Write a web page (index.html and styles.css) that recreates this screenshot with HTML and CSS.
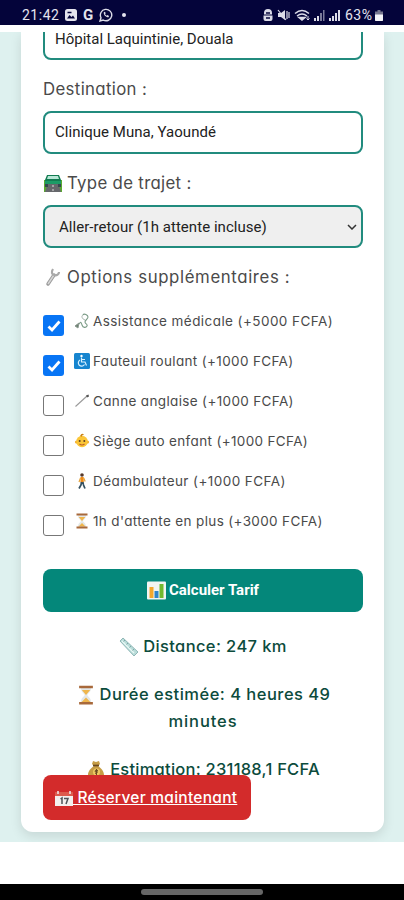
FILE: index.html
```html
<!DOCTYPE html>
<html lang="fr">

<head>
    <meta charset="utf-8">
    <meta name="viewport" content="width=device-width, initial-scale=1.0">
    <title>Réservation de trajet</title>
    <link rel="stylesheet" href="styles.css">
</head>

<body>

    <header class="statusbar">
        <span class="heure">21:42</span>
        <svg class="s-photo" width="12" height="12" viewBox="0 0 12 12"><rect width="12" height="12" rx="2.5" fill="#e4e4ee"/><path d="M2 9.500 4.500 6l2 2L8 6.500l2 3z" fill="#04043a"/><path d="M2.500 3.500h4" stroke="#04043a" stroke-width="1.500"/></svg>
        <span class="google">G</span>
        <svg class="s-wa" width="14" height="14" viewBox="0 0 14 14" fill="none" stroke="#dcdce8" stroke-width="1.400"><path d="M1 13l1-3.300A5.700 5.700 0 1 1 4.200 12z"/><path d="M4.800 4.200c-.5 2.500 2.300 5.300 4.800 5l.4-1.300-1.500-.8-.9.700-1.600-1.600.7-.9-.7-1.500z" fill="#dcdce8" stroke="none"/></svg>
        <i class="point"></i>
        <svg class="s-droite" width="82" height="14" viewBox="0 0 82 14" fill="#dcdce8">
            <path d="M1 5a4 4 0 0 1 8 0v1.500H1zM.5 7.500h9V11a2 2 0 0 1-2 2h-5a2 2 0 0 1-2-2z"/>
            <path d="M3 5h4M3 10h4" stroke="#04043a" stroke-width="1.500"/>
            <path d="M15 5h3l4-3v10l-4-3h-3z"/>
            <path d="M15 2l8 10M24 3v8M26 4v6" stroke="#dcdce8" stroke-width="1.200"/>
            <g fill="none" stroke="#dcdce8" stroke-width="1.500"><path d="M32 5.500q7-6 14 0M34 8q5-4 10 0"/><path d="M36 9.500h6L39 12z" fill="#dcdce8"/><path d="M45 8v4m-1.500-1.500L45 12l1.500-1.500" stroke-width="1"/></g>
            <path d="M51 10h2v3h-2zM54 8h2v5h-2z"/><path d="M57 5h2v8h-2zM60 2h1.500v11H60z" opacity=".55"/>
            <path d="M66 10h2v3h-2zM69 8h2v5h-2zM72 5h2v8h-2zM75 2h2v11h-2z"/>
        </svg>
        <span class="pourcent">63%</span>
        <svg class="s-bat" width="8" height="11" viewBox="0 0 8 11"><path d="M2.500 0h3v1.500H8V11H0V1.500h2.500z" fill="#77778f"/><path d="M0 4.500h8V10a1 1 0 0 1-1 1H1a1 1 0 0 1-1-1z" fill="#f4f4f8"/></svg>
    </header>

    <main class="page">
        <form class="carte">
            <div class="champ premier">Hôpital Laquintinie, Douala</div>

            <div class="titre"><span class="t-dest">Destination :</span></div>
            <div class="champ"><span>Clinique Muna, Yaoundé</span></div>

            <div class="titre">
                <svg width="20" height="20" viewBox="0 0 20 20"><path d="M1 7h18v12H1z" fill="#5aa832"/><path d="M6 7h8l4 12H2z" fill="#66686c"/><path d="M10 8v11" stroke="#ddd" stroke-dasharray="2 2"/><path d="M4 2h12l2 5v4H2V7z" fill="#127c51"/><path d="M5 3h10l1 3H4z" fill="#b7e7d6"/><path d="M2 8h16v3H2z" fill="#1c9b66"/><path d="M2 11h3v3H2zM15 11h3v3h-3z" fill="#37474f"/></svg>
                <span class="t-type">Type de trajet :</span>
            </div>
            <div class="champ choix">
                <span>Aller-retour (1h attente incluse)</span>
                <svg width="10" height="6" viewBox="0 0 10 6"><path d="M1 1l4 4 4-4" fill="none" stroke="#333" stroke-width="1.500"/></svg>
            </div>

            <div class="titre">
                <svg width="20" height="20" viewBox="0 0 20 20"><path d="M5 17l6-9" stroke="#9b9b9b" stroke-width="3.500" stroke-linecap="round"/><path d="M5 17l6-9" stroke="#d6d6d6" stroke-width="1.500"/><path d="M10 2c-2 3-1 6 1 6 3 1 5-1 5-3" fill="none" stroke="#a9a9a9" stroke-width="2.200"/></svg>
                <span class="t-options">Options supplémentaires :</span>
            </div>

            <div class="options">
                <div class="option">
                    <span class="case cochee"><svg width="16" height="16" viewBox="0 0 16 16"><path d="M2.500 8.500l3.500 3.500L13.500 3.500" fill="none" stroke="#fff" stroke-width="2.800"/></svg></span>
                    <svg class="emo" width="16" height="16" viewBox="0 0 16 16" fill="none"><path d="M9 2c1-2 5 0 5 2s-3 3-3 5 3 2 2 4-4 2-5-1-1-4-3-1" stroke="#7b9b86" stroke-width="1.100"/><path d="M9 2c-2 1-1 4 2 5" stroke="#a4b3aa"/><path d="M5 10l-4 3 3 2z" fill="#6a806f" stroke="#8c9991"/></svg>
                    <span class="o1">Assistance médicale (+5000 FCFA)</span>
                </div>
                <div class="option">
                    <span class="case cochee"><svg width="16" height="16" viewBox="0 0 16 16"><path d="M2.500 8.500l3.500 3.500L13.500 3.500" fill="none" stroke="#fff" stroke-width="2.800"/></svg></span>
                    <svg class="emo" width="16" height="16" viewBox="0 0 16 16"><rect width="16" height="16" rx="1.500" fill="#1685cf"/><circle cx="7.500" cy="3" r="1.200" fill="#fff"/><path d="M7.500 4.500V9h3.500l1.500 3.500M8 6.500h3M6 7a3.300 3.300 0 1 0 4.500 4.500" fill="none" stroke="#d9f1ff" stroke-width="1.200"/></svg>
                    <span class="o2">Fauteuil roulant (+1000 FCFA)</span>
                </div>
                <div class="option">
                    <span class="case"></span>
                    <svg class="emo" width="16" height="16" viewBox="0 0 16 16" fill="none"><path d="M1.500 13.500L13 3" stroke="#999" stroke-width="1.100"/><path d="M12 2.500l2.500-1 .5 2-2 1z" fill="#555"/></svg>
                    <span class="o3">Canne anglaise (+1000 FCFA)</span>
                </div>
                <div class="option">
                    <span class="case"></span>
                    <svg class="emo" width="16" height="16" viewBox="0 0 16 16"><circle cx="2.500" cy="9" r="1.500" fill="#f2a51e"/><circle cx="13.500" cy="9" r="1.500" fill="#f2a51e"/><circle cx="8" cy="8.500" r="5.800" fill="#fbc638"/><path d="M6 3q2-4 4-1-3 0-2 2" fill="#c98212"/><circle cx="5.700" cy="8" r="1" fill="#5c4123"/><circle cx="10.300" cy="8" r="1" fill="#5c4123"/><path d="M5.500 11q2.500 2 5 0" fill="none" stroke="#bb5c29" stroke-width="1.200"/></svg>
                    <span class="o4">Siège auto enfant (+1000 FCFA)</span>
                </div>
                <div class="option">
                    <span class="case"></span>
                    <svg class="emo" width="16" height="16" viewBox="0 0 16 16" fill="none"><circle cx="8" cy="2" r="1.800" fill="#57392a"/><path d="M6.500 4h3.200v5.500H6.500z" fill="#f08b16"/><path d="M6.500 5L5 9M9.700 5l1.500 3.500" stroke="#e5a33b" stroke-width="1.200"/><path d="M7.500 9l-.5 3-2 3.500M8.800 9l.7 3 1.500 3.500" stroke="#335061" stroke-width="1.700"/></svg>
                    <span class="o5">Déambulateur (+1000 FCFA)</span>
                </div>
                <div class="option">
                    <span class="case"></span>
                    <svg class="emo" width="16" height="16" viewBox="0 0 16 16"><path d="M4 2h8c0 4-2 4-3 6 1 2 3 2 3 6H4c0-4 2-4 3-6-1-2-3-2-3-6z" fill="#e4e8e8"/><path d="M4.700 4h6.600L8 8zM4.500 13.500L8 10l3.500 3.500z" fill="#efb64c"/><path d="M2.500.5h11v2h-11zM2.500 13.500h11v2h-11z" fill="#a8693b"/></svg>
                    <span class="o6">1h d'attente en plus (+3000 FCFA)</span>
                </div>
            </div>

            <div class="calculer">
                <svg width="19" height="19" viewBox="0 0 19 19"><rect y=".5" width="19" height="18" rx="1" fill="#f3f5f2"/><path d="M2.500 6h4v11h-4z" fill="#f4a82c"/><path d="M7.500 10h4v7h-4z" fill="#3185ca"/><path d="M12.500 3h4v14h-4z" fill="#73b92f"/></svg>
                <span>Calculer Tarif</span>
            </div>

            <div class="resultat">
                <p>
                    <svg width="20" height="20" viewBox="0 0 20 20"><path d="M4 1l15 14-4 4L1 4z" fill="#b9dcd9" stroke="#7da9aa" stroke-width=".8"/><path d="M3 4l12 12" stroke="#e9f8f5" stroke-width="1.200"/><path d="M6 3L4.500 4.500M9 6L7.500 7.500M12 9l-1.500 1.500M15 12l-1.500 1.500" stroke="#719c9c" stroke-width=".8"/></svg>
                    <span class="r1">Distance: 247 km</span>
                </p>
                <p class="duree">
                    <svg width="20" height="20" viewBox="0 0 16 16"><path d="M4 2h8c0 4-2 4-3 6 1 2 3 2 3 6H4c0-4 2-4 3-6-1-2-3-2-3-6z" fill="#e4e8e8"/><path d="M4.700 4h6.600L8 8zM4.500 13.500L8 10l3.500 3.500z" fill="#efb64c"/><path d="M2.500.5h11v2h-11zM2.500 13.500h11v2h-11z" fill="#a8693b"/></svg>
                    <span class="r2">Durée estimée: 4 heures 49</span>
                </p>
                <p class="suite"><span class="r3">minutes</span></p>
                <p>
                    <svg width="20" height="20" viewBox="0 0 20 20"><path d="M7 1l3 1 3-1 1 3-2 2c3 2 6 5 6 9 0 3-2 4-8 4s-8-1-8-4c0-4 3-7 6-9L6 4z" fill="#c69d45"/><path d="M7 5.500h6" stroke="#6b4a20" stroke-width="1.700"/><circle cx="10.500" cy="12" r="3.500" fill="#efc962"/><path d="M12 10.500q-3-1-3 .5t2 1-2 1.500M10.500 9v6" fill="none" stroke="#6b4a20"/></svg>
                    <span class="r4">Estimation: 231188,1 FCFA</span>
                </p>
            </div>

            <a class="reserver"><svg width="18" height="18" viewBox="0 0 18 18"><path d="M0 3h18v14H0z" fill="#f3f0ee"/><path d="M0 3h18v4H0z" fill="#dd5a4c"/><path d="M3 2v3M15 2v3" stroke="#eee" stroke-width="1.500"/><path d="M5.500 10l1.500-1v6M9 9.500h4L11 15" fill="none" stroke="#4d5358" stroke-width="1.500"/></svg><span>&nbsp;Réserver maintenant</span></a>
        </form>
    </main>

    <footer class="navbar"><i></i></footer>

</body>

</html>
```
FILE: styles.css
```css
* {
    box-sizing: border-box;
}

body {
    margin: 0;
    height: 900px;
    display: flex;
    flex-direction: column;
    overflow: hidden;
    background-color: white;
    font-family: Inter, "Open Sans", sans-serif;
    font-feature-settings: "cv11";
    color: #4a4a4a;
}

svg {
    display: block;
    flex: none;
}

span {
    white-space: nowrap;
}

/* barre du telephone */
.statusbar {
    height: 25px;
    flex: none;
    display: flex;
    align-items: center;
    padding: 5px 21px 0 22px;
    background-color: #04043a;
    color: #e4e4ee;
    font-family: Roboto, sans-serif;
    font-size: 14px;
    line-height: 18px;
}

.heure {
    width: 43px;
    letter-spacing: 0.5px;
}

.google {
    font-size: 15px;
    font-weight: bold;
    width: 17px;
    padding-left: 6px;
    margin-right: 5px;
}

.point {
    width: 4px;
    height: 4px;
    border-radius: 50%;
    background-color: #e4e4ee;
    margin-left: 9px;
}

.s-droite {
    margin-left: auto;
}

.pourcent {
    width: 30px;
    letter-spacing: 0.5px;
}

/* page */
.page {
    height: 810px;
    flex: none;
    margin-top: 7px;
    padding: 0 20px 0 21px;
    overflow: hidden;
    background-color: #def1ef;
}

.carte {
    height: 800px;
    padding: 0 21px 0 22px;
    background-color: white;
    border-radius: 0 0 12px 12px;
    box-shadow: 0 4px 12px rgba(0, 0, 0, 0.11);
    display: flow-root;
}

.champ {
    height: 43px;
    display: flex;
    align-items: center;
    padding: 0 10px 1px;
    border: 2px solid #218b7e;
    border-radius: 8px;
    font-family: Roboto, sans-serif;
    font-size: 15px;
    letter-spacing: 0.04px;
    color: #222;
}

.premier {
    margin-top: -15px;
    padding-bottom: 0;
    letter-spacing: 0;
}

.choix {
    justify-content: space-between;
    padding: 0 4px 0 14px;
    background-color: #efefef;
}

.titre {
    height: 27px;
    margin: 16px 0 8px;
    padding-bottom: 1px;
    display: flex;
    align-items: center;
    gap: 4px;
    font-size: 16.8px;
}

.t-dest {
    letter-spacing: 0.35px;
}

.t-type {
    letter-spacing: 0.32px;
}

.t-options {
    letter-spacing: 0.62px;
}

/* options */
.options {
    margin-top: 14px;
}

.option {
    height: 40px;
    display: flex;
    align-items: flex-start;
    font-size: 13.5px;
    line-height: 32px;
    letter-spacing: 0.35px;
}

.o1,
.o5 {
    letter-spacing: 0.43px;
}

.case {
    width: 21px;
    height: 21px;
    flex: none;
    margin: 10px 11px 0 0;
    border: 1.5px solid #777;
    border-radius: 3px;
}

.cochee {
    border: none;
    background-color: #0875f5;
    padding: 2.5px;
}

.emo {
    margin: 8px 3px 0 -1px;
}

.calculer {
    height: 43px;
    margin-top: 24px;
    padding-bottom: 1px;
    display: flex;
    align-items: center;
    justify-content: center;
    gap: 3px;
    border-radius: 8px;
    background-color: #04877a;
    color: white;
    font-family: Roboto, sans-serif;
    font-size: 15px;
    font-weight: bold;
}

/* resultat */
.resultat {
    padding-top: 21px;
    color: #0c4b3c;
    font-size: 16.5px;
    font-weight: 500;
    line-height: 27px;
}

.resultat p {
    height: 27px;
    margin: 0 0 21px;
    display: flex;
    align-items: center;
    justify-content: center;
    gap: 4px;
}

.resultat .duree {
    margin-bottom: 0;
}

.r1 {
    letter-spacing: 0.38px;
}

.r2 {
    letter-spacing: 0.48px;
}

.r3 {
    letter-spacing: 0.9px;
}

.r4 {
    letter-spacing: 0.24px;
}

.reserver {
    position: relative;
    width: 208px;
    height: 45px;
    margin-top: -29px;
    padding-left: 12px;
    display: flex;
    align-items: center;
    border-radius: 8px;
    background-color: #d32b2b;
    color: white;
    font-size: 15.5px;
    font-weight: 500;
    letter-spacing: 0.27px;
    text-decoration: underline;
}

/* bas du telephone */
.navbar {
    height: 16px;
    margin-top: auto;
    flex: none;
    display: flex;
    justify-content: center;
    padding-top: 5px;
    background-color: black;
}

.navbar i {
    width: 122px;
    height: 6px;
    border-radius: 3px;
    background-color: #666;
}
```
